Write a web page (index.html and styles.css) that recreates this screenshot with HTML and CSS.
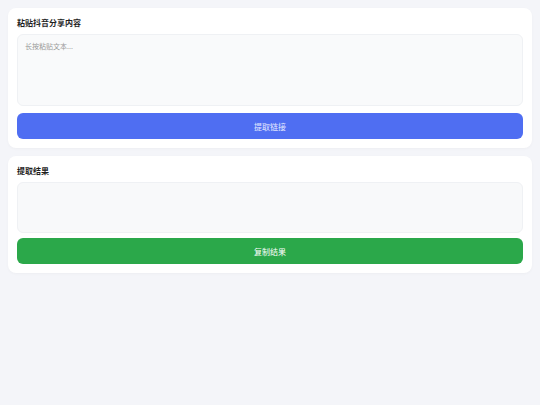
FILE: index.html
```html
<!doctype html>
<html>
<head>
	<meta http-equiv="content-type" content="text/html;charset=utf-8"/>
	<title>抖音链接提取</title>
	<link rel="stylesheet" href="styles.css">
</head>
<body>
	<div id="wrapper">
		<div class="card">
			<h2 class="card-title">粘贴抖音分享内容</h2>
			<textarea class="box box-input" placeholder="长按粘贴文本..."></textarea>
			<button class="btn btn-blue">提取链接</button>
		</div>
		<div class="card card-result">
			<h2 class="card-title">提取结果</h2>
			<div class="box box-result"></div>
			<button class="btn btn-green">复制结果</button>
		</div>
	</div>
</body>
</html>
```

FILE: styles.css
```css
body{
    margin: 0;
    background: #f4f5f9;
    font-family: "Noto Sans CJK SC", "Noto Sans", sans-serif;
    color: #222222;
}
#wrapper {
    padding: 8px;
    display: flex;
    flex-direction: column;
    gap: 8px;
}
.card {
    background: #ffffff;
    border-radius: 8px;
    padding: 9px;
    display: flex;
    flex-direction: column;
    box-shadow: 0 1px 3px rgba(0, 0, 0, 0.03);
}
.card-title {
    margin: 0 0 5px;
    font-size: 8px;
    line-height: 12px;
    font-weight: bold;
    color: #1f1f1f;
}
.box {
    box-sizing: border-box;
    width: 100%;
    background: #f9fafb;
    border: 1px solid #eff1f4;
    border-radius: 6px;
    margin: 0;
}
.box-input {
    height: 72px;
    padding: 6px 7px;
    resize: none;
    font-family: inherit;
    font-size: 7px;
    color: #333333;
    outline: none;
    display: block;
}
.box-input::placeholder {
    color: #9a9a9a;
}
.box-result {
    height: 51px;
    background: #f8f9fa;
}
.btn {
    height: 26px;
    border: none;
    border-radius: 6px;
    color: #ffffff;
    font-family: inherit;
    font-size: 8px;
    margin-top: 7px;
    cursor: pointer;
}
.card-result .btn {
    margin-top: 5px;
}
.btn-blue {
    background: #4f6ef2;
    color: #e4e9ff;
}
.btn-green {
    background: #2ba84a;
}
```
